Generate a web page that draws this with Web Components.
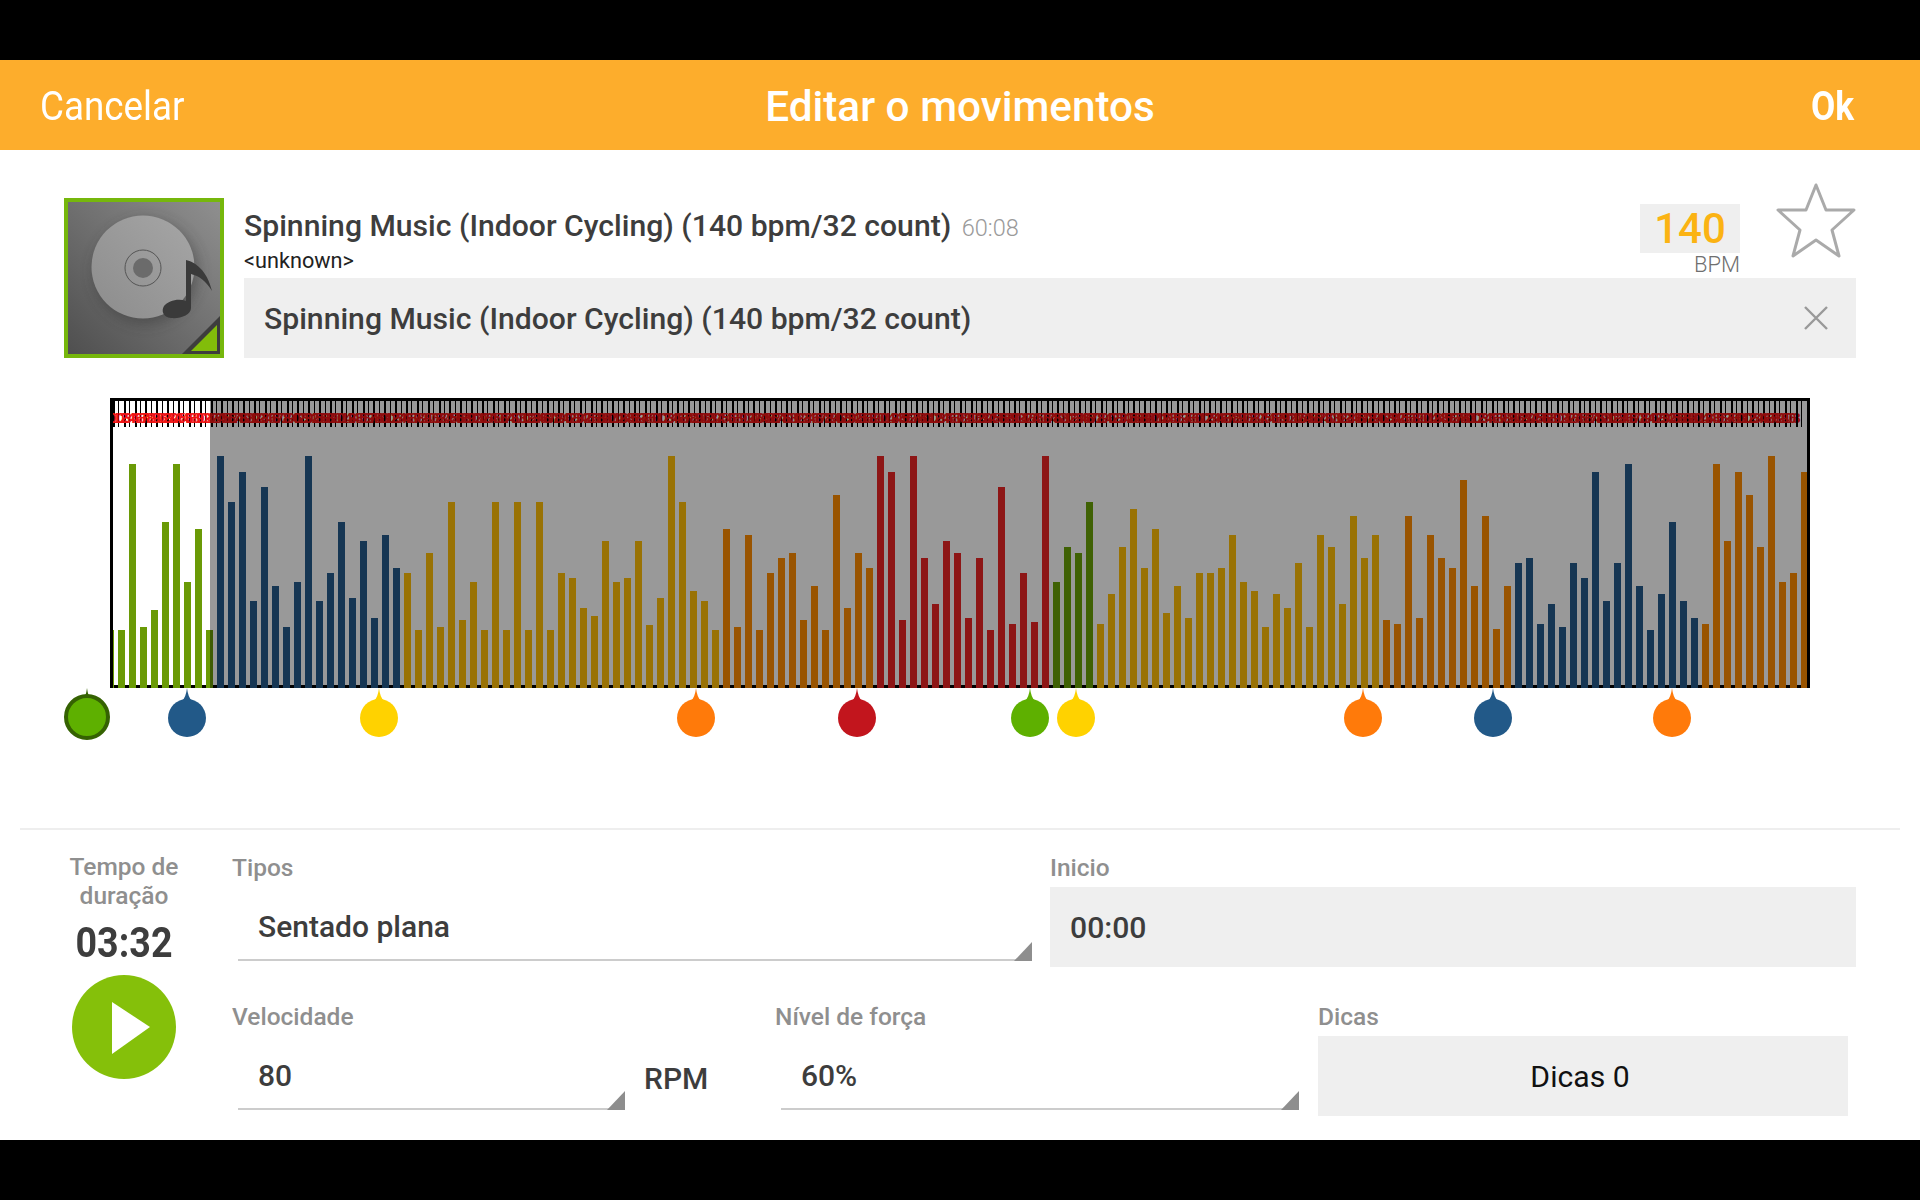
<!DOCTYPE html>
<html lang="pt">
<head>
<meta charset="utf-8">
<title>Editar o movimentos</title>
<style>
  html, body { margin: 0; padding: 0; background: #000; }
  body { width: 1920px; height: 1200px; font-family: Roboto, "Liberation Sans", sans-serif; }
</style>
</head>
<body>
<edit-screen></edit-screen>
<script>
customElements.define('app-header', class AppHeader extends HTMLElement {
  constructor() {
    super();
    this.attachShadow({mode: 'open'});
    this.shadowRoot.innerHTML = `
    <style>
      :host {
        display: grid;
        grid-template-columns: 1fr auto 1fr;
        align-items: center;
        height: 90px;
        padding: 0 66px 0 40px;
        background: #fdad2c;
        color: #fff;
        font-size: 40px;
      }
      .cancel { display: inline-block; margin-top: 2px; transform: scaleX(.92); transform-origin: left center; }
      .cancelwrap { white-space: nowrap; }
      .title { position: relative; left: 13px; margin-top: 2px; font-weight: 500; font-size: 42.3px; }
      .ok { text-align: right; font-weight: 700; margin-top: 2px; transform: scaleX(.88); transform-origin: right center; }
    </style>
    <div class="cancelwrap"><span class="cancel">Cancelar</span></div>
    <div class="title">Editar o movimentos</div>
    <div class="ok">Ok</div>
    `
  }
})

customElements.define('song-cover', class SongCover extends HTMLElement {
  constructor() {
    super();
    this.attachShadow({mode: 'open'});
    this.shadowRoot.innerHTML = `
    <style>
      :host { display: block; width: 160px; height: 160px; }
      svg { display: block; }
    </style>
    <svg width="160" height="160" viewBox="0 0 160 160">
      <defs>
        <linearGradient id="bg" x1="0" y1="1" x2="1" y2="0">
          <stop offset="0" stop-color="#4f4f4f"/><stop offset="1" stop-color="#8f8f8f"/>
        </linearGradient>
        <linearGradient id="disc" x1="0" y1="1" x2="1" y2="0">
          <stop offset="0" stop-color="#8c8c8c"/><stop offset="1" stop-color="#a6a6a6"/>
        </linearGradient>
        <filter id="blur" x="-30%" y="-30%" width="160%" height="160%"><feGaussianBlur stdDeviation="7"/></filter>
      </defs>
      <rect width="160" height="160" fill="#76b70c"/>
      <rect x="4" y="4" width="152" height="152" fill="url(#bg)"/>
      <circle cx="82" cy="74" r="52" fill="#333" opacity=".45" filter="url(#blur)"/>
      <circle cx="79" cy="69" r="51.5" fill="url(#disc)"/>
      <circle cx="79" cy="70" r="18" fill="none" stroke="#555" stroke-width="1"/>
      <circle cx="79" cy="70" r="10" fill="#6b6b6b"/>
      <path d="M122 62 C131 64 143 72 148 93 C142 83 135 78 127 76 L127 110 C127 117 116 121 107 120 C99 119 97 113 100 108 C104 103 114 100 122 103 Z" fill="#3a3a3a"/>
      <path d="M118 156 L156 118 L156 156 Z" fill="#3d3d3d"/>
      <path d="M127 153 L153 127 L153 153 Z" fill="#82bd0a"/>
    </svg>
    `
  }
})

customElements.define('bpm-badge', class BpmBadge extends HTMLElement {
  constructor() {
    super();
    this.attachShadow({mode: 'open'});
    this.shadowRoot.innerHTML = `
    <style>
      :host { display: block; width: 100px; margin-top: 6px; }
      .value {
        height: 49px;
        line-height: 49px;
        background: #efefef;
        color: #fbb313;
        font-size: 42px;
        font-weight: 500;
        text-align: center;
      }
      .unit {
        margin-top: 1px;
        font-size: 22px;
        font-weight: 300;
        line-height: 22px;
        color: #6f6f6f;
        text-align: right;
      }
    </style>
    <div class="value"><slot></slot></div>
    <div class="unit">BPM</div>
    `
  }
})

customElements.define('fav-star', class FavStar extends HTMLElement {
  constructor() {
    super();
    this.attachShadow({mode: 'open'});
    this.shadowRoot.innerHTML = `
    <style>
      :host { display: block; width: 80px; height: 76px; margin: -15px 0 0 36px; }
      svg { display: block; }
    </style>
    <svg width="80" height="76" viewBox="0 0 80 76">
      <path d="M40 2 L50 27 L78 27 L56 47 L63 73 L40 57 L17 73 L24 47 L2 27 L30 27 Z" fill="#fff" stroke="#aaa" stroke-width="3" stroke-linejoin="round"/>
    </svg>
    `
  }
})

customElements.define('text-box', class TextBox extends HTMLElement {
  constructor() {
    super();
    this.attachShadow({mode: 'open'});
    this.shadowRoot.innerHTML = `
    <style>
      :host {
        display: flex;
        align-items: center;
        height: 80px;
        padding: 0 20px;
        background: #efefef;
        color: #3d3d3d;
        font-size: 30.15px;
        font-weight: 500;
      }
      :host([centered]) { justify-content: center; padding-right: 26px; color: #111; font-weight: 400; }
      .text { flex: 1; }
      :host([centered]) .text { flex: none; }
      svg { display: none; }
      :host([clearable]) svg { display: block; margin-right: 8px; }
    </style>
    <div class="text"><slot></slot></div>
    <svg width="24" height="24" viewBox="0 0 24 24"><path d="M1 1 L23 23 M23 1 L1 23" stroke="#999" stroke-width="2.4" fill="none"/></svg>
    `
  }
})

customElements.define('drop-select', class DropSelect extends HTMLElement {
  constructor() {
    super();
    this.attachShadow({mode: 'open'});
    this.shadowRoot.innerHTML = `
    <style>
      :host {
        display: flex;
        align-items: center;
        position: relative;
        box-sizing: border-box;
        height: 74px;
        margin-left: 6px;
        padding: 7px 0 0 20px;
        border-bottom: 2px solid #ccc;
        color: #3d3d3d;
        font-size: 30px;
        font-weight: 500;
      }
      .arrow {
        position: absolute;
        right: 0;
        bottom: -2px;
        width: 18px;
        height: 19px;
        background: #8e8e8e;
        clip-path: polygon(100% 0, 100% 100%, 0 100%);
      }
    </style>
    <slot></slot><div class="arrow"></div>
    `
  }
})

customElements.define('form-field', class FormField extends HTMLElement {
  constructor() {
    super();
    this.attachShadow({mode: 'open'});
    this.shadowRoot.innerHTML = `
    <style>
      :host { display: block; width: var(--field-width, auto); }
      .label {
        height: 28px;
        margin-bottom: 5px;
        font-size: 24.5px;
        line-height: 28px;
        font-weight: 500;
        color: #8f8f8f;
      }
    </style>
    <div class="label"></div>
    <slot></slot>
    `
  }
  connectedCallback() {
    this.shadowRoot.querySelector('.label').textContent = this.getAttribute('label');
  }
})

customElements.define('chart-marker', class ChartMarker extends HTMLElement {
  constructor() {
    super();
    this.attachShadow({mode: 'open'});
  }
  connectedCallback() {
    const color = this.getAttribute('color');
    const selected = this.hasAttribute('selected');
    const circle = selected
      ? `<circle cx="25" cy="29" r="21" fill="${color}" stroke="#356202" stroke-width="4"/>`
      : `<circle cx="25" cy="30" r="19" fill="${color}"/>`;
    this.shadowRoot.innerHTML = `
    <style>
      :host { position: absolute; top: 0; left: calc(var(--x) * 1px - 25px); width: 50px; height: 54px; }
      svg { display: block; }
    </style>
    <svg width="50" height="54" viewBox="0 0 50 54">
      <path d="M20 13 Q24 9 25 0 Q26 9 30 13 Z" fill="${selected ? '#356202' : color}"/>
      ${circle}
    </svg>
    `;
  }
})

// bar tops are in zoomed crop coords, top px = 440 + z / 3
const BAR_TOPS = [570,570,72,561,510,246,72,426,267,570,48,186,96,483,141,438,561,426,48,483,399,246,474,303,534,285,384,
  399,570,339,561,186,540,426,570,186,570,186,570,186,570,399,414,504,528,303,426,414,303,555,474,48,186,453,483,570,
  267,561,285,570,399,354,339,540,438,570,165,504,339,384,
  48,96,540,48,354,492,303,339,534,354,570,141,552,399,546,48,
  426,321,339,186,
  552,462,321,207,384,267,519,438,534,399,399,384,285,426,453,561,462,504,369,561,285,321,492,228,354,285,
  540,552,228,534,285,354,384,120,438,228,567,438,
  369,354,552,492,561,369,414,96,483,369,72,438,570,462,246,483,534,
  552,72,303,96,165,321,48,426,399,96];

const BAR_RUNS = [[10,'#6a9a06'],[17,'#265a8a'],[29,'#ffbe08'],[14,'#ff8d00'],[16,'#eb2525'],[4,'#6aa208'],[26,'#ffbe08'],[12,'#ff8d00'],[17,'#265a8a'],[10,'#ff8d00']];

customElements.define('beat-chart', class BeatChart extends HTMLElement {
  constructor() {
    super();
    this.attachShadow({mode: 'open'});
    this.shadowRoot.innerHTML = `
    <style>
      :host { display: block; width: 1700px; height: 290px; margin-left: 46px; }
      .frame {
        position: relative;
        box-sizing: border-box;
        height: 290px;
        border: 3px solid #000;
        border-bottom: 0;
        overflow: hidden;
        background: #fff;
      }
      .ruler { display: flex; height: 26px; }
      .tick {
        flex: none;
        box-sizing: border-box;
        height: 26px;
        border-left: 1px solid #000;
      }
      .tick:nth-child(odd) { border-left-width: 2px; }
      .tick span {
        display: block;
        margin: 12px 0 0 -6px;
        font: 700 14px/11px "Liberation Sans", sans-serif;
        color: #f01414;
        white-space: nowrap;
      }
      .bars {
        display: flex;
        align-items: flex-end;
        gap: 4px;
        height: 261px;
        margin-left: -6px;
        background: linear-gradient(#000, #000) left bottom / 100% 3px no-repeat;
      }
      .bar { flex: none; width: 7px; }
      .shade {
        position: absolute;
        left: 97px;
        right: 0;
        top: 0;
        bottom: 0;
        background: rgba(0, 0, 0, .4);
      }
    </style>
    <div class="frame">
      <div class="ruler"></div>
      <div class="bars"></div>
      <div class="shade"></div>
    </div>
    `
  }
  connectedCallback() {
    const ruler = this.shadowRoot.querySelector('.ruler');
    const steps = [5, 6, 5, 6, 5, 5, 6];
    let x = 0, n = 0;
    while (x < 1694) {
      const tick = document.createElement('div');
      tick.className = 'tick';
      const w = steps[n % steps.length];
      tick.style.width = w + 'px';
      if (x < 1682) {
        const label = document.createElement('span');
        label.textContent = String(n * 12 % 100).padStart(2, '0');
        tick.appendChild(label);
      }
      ruler.appendChild(tick);
      x += w;
      n++;
    }
    const bars = this.shadowRoot.querySelector('.bars');
    let k = 0;
    for (const [count, color] of BAR_RUNS) {
      for (let i = 0; i < count; i++, k++) {
        const bar = document.createElement('div');
        bar.className = 'bar';
        bar.style.height = (688 - (440 + BAR_TOPS[k] / 3)) + 'px';
        bar.style.background = color;
        bars.appendChild(bar);
      }
    }
  }
})

customElements.define('play-button', class PlayButton extends HTMLElement {
  constructor() {
    super();
    this.attachShadow({mode: 'open'});
    this.shadowRoot.innerHTML = `
    <style>
      :host { display: block; width: 104px; height: 104px; margin: 9px auto 0; }
      svg { display: block; }
    </style>
    <svg width="104" height="104" viewBox="0 0 104 104">
      <circle cx="52" cy="52" r="52" fill="#85c00a"/>
      <path d="M40 27 L78 52 L40 79 Z" fill="#fff"/>
    </svg>
    `
  }
})

customElements.define('edit-screen', class EditScreen extends HTMLElement {
  constructor() {
    super();
    this.attachShadow({mode: 'open'});
    this.shadowRoot.innerHTML = `
    <style>
      :host { display: block; width: 1920px; height: 1200px; padding-top: 60px; box-sizing: border-box; background: #000; font-family: Roboto, "Liberation Sans", sans-serif; }
      .page { height: 990px; background: #fff; overflow: hidden; }
      .track { display: grid; grid-template-columns: 160px 1fr; column-gap: 20px; margin: 48px 64px 0; }
      .head { display: flex; height: 80px; }
      .names { flex: 1; padding-top: 10px; }
      .song { font-size: 30.15px; line-height: 36px; font-weight: 500; color: #3d3d3d; white-space: nowrap; }
      .song small { margin-left: 3px; font-size: 23.5px; font-weight: 300; color: #9a9a9a; }
      .artist { margin-top: 3px; font-size: 21.7px; line-height: 24px; color: #222; }
      .chart-wrap { margin: 40px 64px 0; }
      .markers { position: relative; height: 140px; margin-left: -64px; }
      .divider { height: 2px; margin: 0 20px; background: #eee; }
      .form { display: grid; grid-template-columns: 120px 1fr; column-gap: 48px; padding: 24px 64px 0; }
      .duration { text-align: center; margin-top: -1px; }
      .duration .cap { font-size: 24.5px; line-height: 28.5px; font-weight: 500; color: #8f8f8f; }
      .duration .time { display: block; margin-top: 8px; font-size: 43px; line-height: 48px; font-weight: 700; color: #3d3d3d; transform: scaleX(.875); }
      .row { display: flex; }
      .row + .row { margin-top: 36px; }
      .rpm { align-self: flex-end; width: 131px; margin: 0 0 19px 19px; font-size: 30px; font-weight: 500; line-height: 36px; color: #3d3d3d; }
    </style>
    <app-header></app-header>
    <div class="page">
      <div class="track">
        <song-cover></song-cover>
        <div>
          <div class="head">
            <div class="names">
              <div class="song">Spinning Music (Indoor Cycling) (140 bpm/32 count) <small>60:08</small></div>
              <div class="artist">&lt;unknown&gt;</div>
            </div>
            <bpm-badge>140</bpm-badge>
            <fav-star></fav-star>
          </div>
          <text-box clearable>Spinning Music (Indoor Cycling) (140 bpm/32 count)</text-box>
        </div>
      </div>
      <div class="chart-wrap">
        <beat-chart></beat-chart>
        <div class="markers">
          <chart-marker selected color="#5eb000" style="--x:87"></chart-marker>
          <chart-marker color="#225988" style="--x:187"></chart-marker>
          <chart-marker color="#ffd200" style="--x:379"></chart-marker>
          <chart-marker color="#ff7a0a" style="--x:696"></chart-marker>
          <chart-marker color="#c2151d" style="--x:857"></chart-marker>
          <chart-marker color="#5eb000" style="--x:1030"></chart-marker>
          <chart-marker color="#ffd200" style="--x:1076"></chart-marker>
          <chart-marker color="#ff7a0a" style="--x:1363"></chart-marker>
          <chart-marker color="#225988" style="--x:1493"></chart-marker>
          <chart-marker color="#ff7a0a" style="--x:1672"></chart-marker>
        </div>
      </div>
      <div class="divider"></div>
      <div class="form">
        <div class="duration">
          <div class="cap">Tempo de<br>duração</div>
          <span class="time">03:32</span>
          <play-button></play-button>
        </div>
        <div>
          <div class="row">
            <form-field label="Tipos" style="--field-width:800px"><drop-select>Sentado plana</drop-select></form-field>
            <form-field label="Inicio" style="--field-width:806px;margin-left:18px"><text-box>00:00</text-box></form-field>
          </div>
          <div class="row">
            <form-field label="Velocidade" style="--field-width:393px"><drop-select>80</drop-select></form-field>
            <div class="rpm">RPM</div>
            <form-field label="Nível de força" style="--field-width:524px"><drop-select>60%</drop-select></form-field>
            <form-field label="Dicas" style="--field-width:530px;margin-left:19px"><text-box centered>Dicas 0</text-box></form-field>
          </div>
        </div>
      </div>
    </div>
    `
  }
})
</script>
</body>
</html>
